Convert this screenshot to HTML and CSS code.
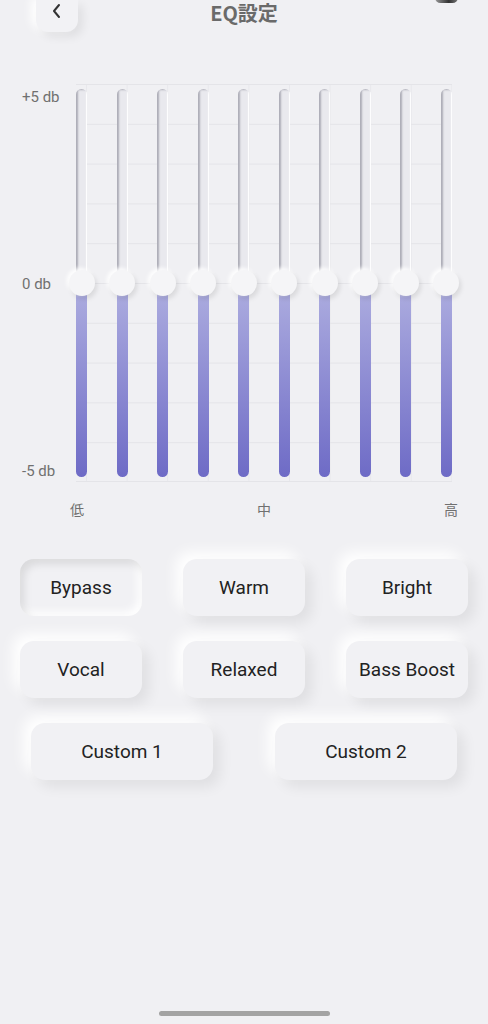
FILE: index.html
```html
<!DOCTYPE html>
<html lang="ja">
<head>
    <meta charset="UTF-8">
    <meta name="viewport" content="width=device-width, initial-scale=1.0">
    <title>EQ設定</title>
    <link rel="stylesheet" href="styles.css">
</head>
<body>
    <div id="wrap">
        <div id="header">
            <a href="#" class="back">
                <svg width="12" height="16" viewBox="0 0 12 16"><path d="M8 2 L3 8 L8 14" fill="none" stroke="#333" stroke-width="2" stroke-linecap="round" stroke-linejoin="round"/></svg>
            </a>
            <h1 class="title">EQ設定</h1>
            <div class="corner"></div>
        </div>

        <div id="eq">
            <div class="db">
                <span>+5 db</span>
                <span>0 db</span>
                <span>-5 db</span>
            </div>
            <div class="chart">
                <div id="sliders"></div>
            </div>
        </div>
        <div class="freq">
            <span>低</span>
            <span>中</span>
            <span>高</span>
        </div>

        <div id="presets">
            <div class="row three">
                <a href="#" class="btn on">Bypass</a>
                <a href="#" class="btn">Warm</a>
                <a href="#" class="btn">Bright</a>
            </div>
            <div class="row three">
                <a href="#" class="btn">Vocal</a>
                <a href="#" class="btn">Relaxed</a>
                <a href="#" class="btn">Bass Boost</a>
            </div>
            <div class="row two">
                <a href="#" class="btn">Custom 1</a>
                <a href="#" class="btn">Custom 2</a>
            </div>
        </div>

        <div class="home"></div>
    </div>
    <script>
        const sliders = document.querySelector('#sliders');
        let str = "";
        for (let i = 0; i < 10; i++) {
            str = str + `<div class="slider"><div class="track"><i class="up"></i><i class="down"></i></div><span class="thumb"></span></div>`;
        }
        sliders.innerHTML = str;
    </script>
</body>
</html>
```

FILE: styles.css
```css
* { margin:0; padding:0; box-sizing: border-box;}
body {
    background-color: #f0f0f3;
    font-family: Roboto, "Noto Sans CJK JP", sans-serif;
}
a { text-decoration: none; color: inherit; }
#wrap {
    min-height: 100vh;
    display: flex;
    flex-direction: column;
}
#header {
    position: relative;
    display: grid;
    grid-template-columns: 1fr auto 1fr;
    align-items: start;
    height: 32px;
}
.back {
    margin-left: 36px;
    width: 42px;
    height: 32px;
    border-radius: 0 0 12px 12px;
    background-color: #f2f2f5;
    box-shadow: 5px 5px 10px rgba(0,0,0,0.07), -5px -2px 10px #fff;
    display: flex;
    justify-content: center;
    padding-top: 3px;
}
.title {
    font-family: "Noto Sans CJK JP", sans-serif;
    font-size: 20px;
    font-weight: 700;
    color: #6a6a6a;
    line-height: 22px;
    padding-top: 2px;
}
.corner {
    position: absolute;
    right: 30px;
    top: -8px;
    width: 23px;
    height: 11px;
    border-radius: 6px;
    background: linear-gradient(90deg, #999, #333 60%, #777);
}
#eq {
    display: flex;
    margin-top: 52px;
    height: 398px;
}
.db {
    width: 76px;
    padding: 4px 0 2px 22px;
    display: flex;
    flex-direction: column;
    justify-content: space-between;
    font-size: 15px;
    line-height: 18px;
    color: #707070;
}
.chart {
    width: 376px;
    height: 398px;
    border-bottom: 1px solid #e4e4e8;
    background-image:
        linear-gradient(#e4e4e8 1px, transparent 1px),
        linear-gradient(90deg, #e8e8ec 1px, transparent 1px);
    background-size: 100% 39.8px, 40.6px 100%;
    background-position: 0 0, 10px 0;
    background-repeat: repeat-y, repeat-x;
    padding: 5px 0 4px;
}
#sliders {
    height: 100%;
    display: flex;
    justify-content: space-between;
}
.slider {
    position: relative;
    width: 11px;
    height: 100%;
}
.track {
    height: 100%;
    border-radius: 6px;
    overflow: hidden;
    display: flex;
    flex-direction: column;
}
.track i { flex: 1; display: block; }
.track .up {
    background-color: #e9e9ee;
    box-shadow: inset 2px 1px 2px rgba(60,60,80,0.35), inset -1px 0 1px #fff;
}
.track .down {
    background: linear-gradient(#aeaee0, #6e6bc6);
}
.thumb {
    position: absolute;
    left: 50%;
    top: 50%;
    width: 26px;
    height: 26px;
    border-radius: 50%;
    transform: translate(-50%,-50%);
    background-color: #f5f5f7;
    box-shadow: 2px 3px 5px rgba(0,0,0,0.1), -2px -2px 4px #fff;
}
.freq {
    display: flex;
    justify-content: space-between;
    margin: 18px 30px 0 70px;
    font-size: 14px;
    line-height: 20px;
    color: #707070;
}
#presets {
    margin-top: 39px;
    display: flex;
    flex-direction: column;
    gap: 25px;
}
.row { display: grid; }
.row.three {
    grid-template-columns: repeat(3, 122px);
    column-gap: 41px;
    padding-left: 20px;
}
.row.two {
    grid-template-columns: repeat(2, 182px);
    justify-content: space-between;
    padding: 0 31px;
}
.btn {
    height: 57px;
    border-radius: 14px;
    background-color: #f1f1f4;
    box-shadow: 7px 7px 14px rgba(0,0,0,0.07), -7px -7px 14px #fff;
    display: flex;
    align-items: center;
    justify-content: center;
    font-size: 19px;
    color: #222;
}
.btn.on {
    box-shadow: inset 4px 5px 8px rgba(0,0,0,0.1), inset -4px -4px 8px #fff;
}
.home {
    margin: auto auto 8px;
    width: 171px;
    height: 5px;
    border-radius: 3px;
    background-color: #a3a3a3;
}
```
